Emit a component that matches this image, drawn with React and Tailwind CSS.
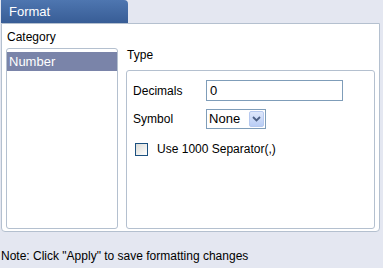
import React from 'react';

const App = () => {
    return (
        <div className="w-[383px] h-[268px] bg-[#e4e7f1] font-['Liberation_Sans',Arial,sans-serif] text-[12px] text-black overflow-hidden">
            {/* Tab */}
            <div className="ml-[1px] w-[127px] h-[23px] rounded-tr-[4px] bg-gradient-to-b from-[#4e76b0] to-[#385d96] text-white text-[13px] leading-[23px] pl-[8px]">
                Format
            </div>

            {/* Panel */}
            <div className="ml-[1px] w-[379px] h-[209px] bg-white border border-[#b4c0cf] rounded-b-[4px] px-[4px] pt-[6px]">
                <div className="flex gap-[8px]">
                    <div className="w-[113px]">
                        <div className="leading-[14px] mb-[4px] pl-[1px]">Category</div>
                        <div className="h-[181px] border border-[#b4c0cf] rounded-[3px] pt-[3px]">
                            <div className="h-[19px] bg-[#7a84a9] text-white text-[13px] leading-[19px] pl-[2px]">Number</div>
                        </div>
                    </div>
                    <div className="w-[251px] pt-[18px]">
                        <div className="leading-[14px] mb-[8px] pl-[1px]">Type</div>
                        <div className="h-[159px] border border-[#b4c0cf] rounded-[3px] pl-[6px] pt-[9px]">
                            <div className="flex items-center h-[21px]">
                                <span className="w-[73px]">Decimals</span>
                                <div className="w-[137px] h-[21px] border border-[#7f9db9] leading-[19px] pl-[3px] text-[13px]">0</div>
                            </div>
                            <div className="flex items-center h-[20px] mt-[8px]">
                                <span className="w-[73px]">Symbol</span>
                                <div className="flex items-center h-[20px] border border-[#7f9db9] pl-[2px] pr-[1px] text-[13px]">
                                    <span className="w-[40px]">None</span>
                                    <div className="w-[15px] h-[16px] rounded-[2px] bg-gradient-to-b from-[#dfe8fb] to-[#b9cdf5] border border-[#b6c9ef] flex items-center justify-center">
                                        <svg width="9" height="6" viewBox="0 0 9 6">
                                            <path d="M1 1 L4.5 4.5 L8 1" stroke="#4d6185" strokeWidth="1.8" fill="none" />
                                        </svg>
                                    </div>
                                </div>
                            </div>
                            <div className="flex items-center mt-[11px] pl-[2px]">
                                <div className="w-[13px] h-[13px] border border-[#1c5180] bg-gradient-to-br from-[#dcdcd7] to-white" />
                                <span className="ml-[9px]">Use 1000 Separator(,)</span>
                            </div>
                        </div>
                    </div>
                </div>
            </div>

            <div className="mt-[17px] pl-[1px] leading-[14px]">Note: Click "Apply" to save formatting changes</div>
        </div>
    );
};

export default App;
